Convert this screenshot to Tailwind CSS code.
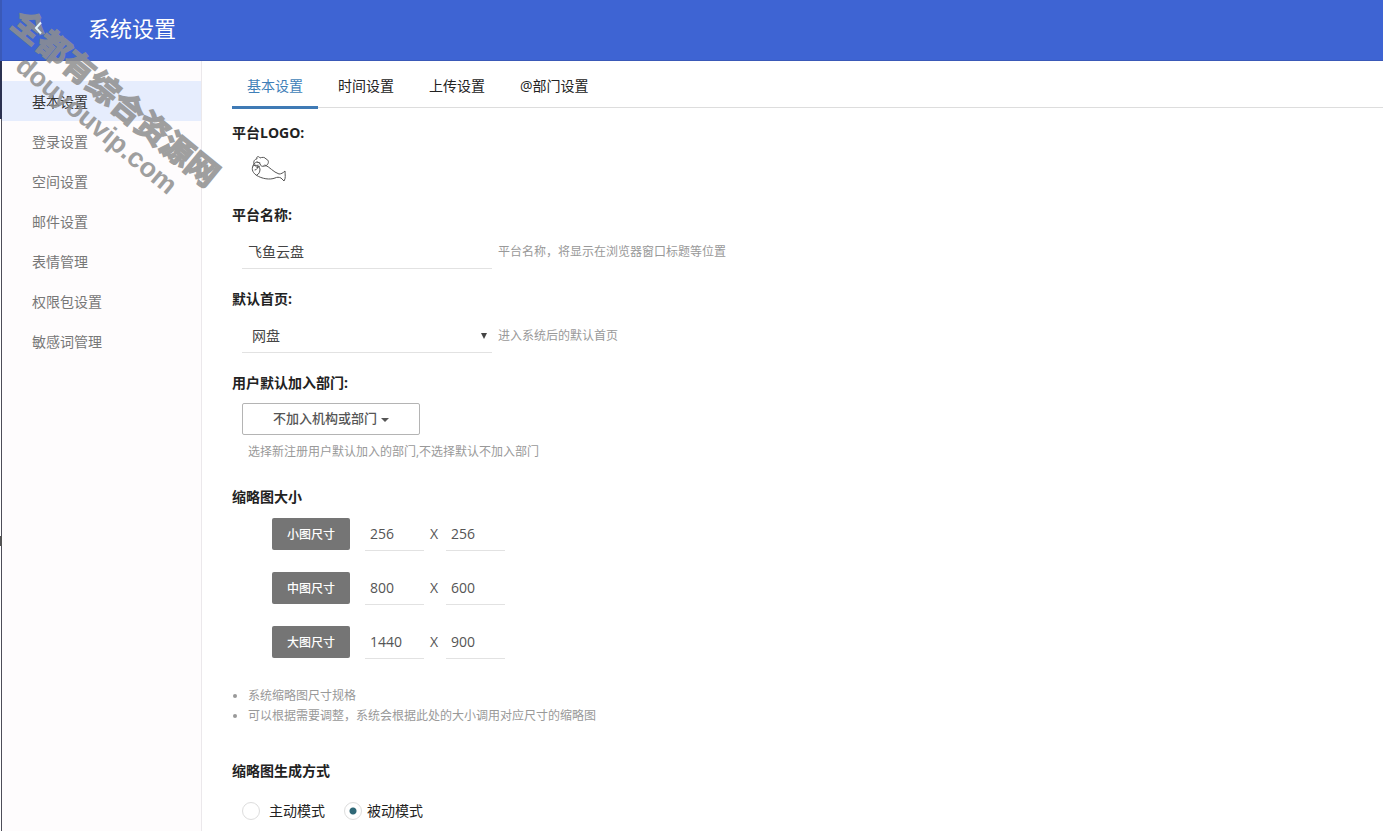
<!DOCTYPE html>
<html lang="zh-CN">
<head>
<meta charset="utf-8">
<meta name="viewport" content="width=device-width, initial-scale=1">
<title>系统设置</title>
<script src="https://cdn.jsdelivr.net/npm/@tailwindcss/browser@4"></script>
</head>
<body class="relative flex h-screen flex-col overflow-hidden bg-white font-['Open_Sans','Noto_Sans_CJK_SC',sans-serif] text-sm leading-5 text-[#222]">
  <header class="flex h-[61px] shrink-0 items-center border-b border-l-2 border-[#3a59b8] bg-[#3e64d3] pb-1 text-white">
    <a href="#" aria-label="返回" class="relative z-10 flex w-[72px] justify-center">
      <svg class="size-4" viewBox="0 0 16 16" fill="none" stroke="#e4f6ff" stroke-width="2"><path d="M11 2.500 6 8l5 5.500"/></svg>
    </a>
    <h1 class="ml-3.5 text-[22px] leading-8">系统设置</h1>
  </header>

  <div class="flex min-h-0 grow">
    <nav class="ml-px w-[201px] shrink-0 border-r border-l border-r-[#ebe8eb] border-l-[#4d4d58] bg-[#fefcfd] pt-5 leading-[38px] text-[#777]" aria-label="设置分类">
      <a href="#" aria-current="page" class="block bg-[#e6edfd] pt-0.5 pl-[30px] text-[#333]">基本设置</a>
      <a href="#" class="block pt-0.5 pl-[30px]">登录设置</a>
      <a href="#" class="block pt-0.5 pl-[30px]">空间设置</a>
      <a href="#" class="block pt-0.5 pl-[30px]">邮件设置</a>
      <a href="#" class="block pt-0.5 pl-[30px]">表情管理</a>
      <a href="#" class="block pt-0.5 pl-[30px]">权限包设置</a>
      <a href="#" class="block pt-0.5 pl-[30px]">敏感词管理</a>
    </nav>

    <main class="grow overflow-hidden pl-[30px]">
      <div class="flex h-[47px] gap-[5px] border-b border-[#ddd] leading-[50px]">
        <a href="#" class="h-12 border-b-3 border-[#3f7ab5] px-[15px] text-[#3f7fb8]">基本设置</a>
        <a href="#" class="px-[15px]">时间设置</a>
        <a href="#" class="px-[15px]">上传设置</a>
        <a href="#" class="px-[15px]">@部门设置</a>
      </div>

      <form class="pt-[15px]">
        <section class="h-[82px]">
          <h2 class="font-bold">平台LOGO:</h2>
          <svg class="mt-3 ml-[18px] h-[30px] w-[38px]" viewBox="0 0 38 30" fill="none" stroke="#555" stroke-width="1" stroke-linecap="round" stroke-linejoin="round" role="img" aria-label="飞鱼">
            <path d="M4 9C3 6 5 4 7 4c-1-3 2-3 3-1 2-1 5-1 6 1 3 1 3 4 1 6-1 1-2 1-3 1"/>
            <path d="M4 9c2-3 5-2 6 0 1 2 2 3 4 2M3 11c3-2 6 0 7 3 0 3-1 5-3 6M5 10c1 3 3 3 5 1M7 7l3 1M8 10c0 3-1 5-3 5"/>
            <path d="M4 9c-3 4-2 8 2 11 6 4 14 5 19 3 2-1 4-1 6 0l3 3c2-3 1-6 1-10-2 2-4 3-6 3-6-2-9-7-14-9"/>
          </svg>
        </section>

        <section class="h-[84px]">
          <h2 class="font-bold"><label for="name">平台名称:</label></h2>
          <div class="mt-2.5 ml-2.5 flex items-center gap-1.5">
            <input id="name" value="飞鱼云盘" class="h-[34px] w-[250px] border-b border-[#e2e2e2] px-1.5 pb-0.5 text-[#444] outline-none">
            <span class="text-xs text-[#999]">平台名称，将显示在浏览器窗口标题等位置</span>
          </div>
        </section>

        <section class="h-[84px]">
          <h2 class="font-bold"><label for="home">默认首页:</label></h2>
          <div class="mt-2.5 ml-2.5 flex items-center gap-1.5">
            <div class="relative w-[250px]">
              <select id="home" class="block h-[34px] w-full appearance-none border-b border-[#e2e2e2] px-2.5 text-[#444] outline-none"><option>网盘</option></select>
              <svg class="pointer-events-none absolute top-3.5 right-[5px] size-1.5" viewBox="0 0 6 6" fill="#444"><path d="M0 0h6L3 6z"/></svg>
            </div>
            <span class="text-xs text-[#999]">进入系统后的默认首页</span>
          </div>
        </section>

        <section class="h-[114px]">
          <h2 class="font-bold">用户默认加入部门:</h2>
          <button type="button" class="mt-2.5 ml-2.5 flex h-8 w-[178px] items-center justify-center gap-1 rounded-xs border border-[#b4b4b4] pb-0.5 text-[13px] font-medium text-[#555]">不加入机构或部门
            <svg class="mt-1 h-1 w-2" viewBox="0 0 8 4" fill="#555"><path d="M0 0h8L4 4z"/></svg>
          </button>
          <p class="mt-[7px] ml-4 text-xs leading-5 text-[#999]">选择新注册用户默认加入的部门,不选择默认不加入部门</p>
        </section>

        <section class="h-[274px]">
          <h2 class="font-bold">缩略图大小</h2>
          <div class="mt-2.5 ml-10 flex flex-col gap-5">
            <div class="flex h-[34px] items-center">
              <span class="flex h-8 w-[78px] items-center justify-center rounded-xs bg-[#757575] pt-0.5 text-xs font-medium text-white">小图尺寸</span>
              <input aria-label="小图宽度" value="256" class="ml-[15px] h-[34px] w-[59px] border-b border-[#e2e2e2] pl-[5px] text-[#555] outline-none">
              <span class="w-5 text-center text-[#555]">X</span>
              <input aria-label="小图高度" value="256" class="ml-0.5 h-[34px] w-[59px] border-b border-[#e2e2e2] pl-[5px] text-[#555] outline-none">
            </div>
            <div class="flex h-[34px] items-center">
              <span class="flex h-8 w-[78px] items-center justify-center rounded-xs bg-[#757575] pt-0.5 text-xs font-medium text-white">中图尺寸</span>
              <input aria-label="中图宽度" value="800" class="ml-[15px] h-[34px] w-[59px] border-b border-[#e2e2e2] pl-[5px] text-[#555] outline-none">
              <span class="w-5 text-center text-[#555]">X</span>
              <input aria-label="中图高度" value="600" class="ml-0.5 h-[34px] w-[59px] border-b border-[#e2e2e2] pl-[5px] text-[#555] outline-none">
            </div>
            <div class="flex h-[34px] items-center">
              <span class="flex h-8 w-[78px] items-center justify-center rounded-xs bg-[#757575] pt-0.5 text-xs font-medium text-white">大图尺寸</span>
              <input aria-label="大图宽度" value="1440" class="ml-[15px] h-[34px] w-[59px] border-b border-[#e2e2e2] pl-[5px] text-[#555] outline-none">
              <span class="w-5 text-center text-[#555]">X</span>
              <input aria-label="大图高度" value="900" class="ml-0.5 h-[34px] w-[59px] border-b border-[#e2e2e2] pl-[5px] text-[#555] outline-none">
            </div>
          </div>
          <ul class="mt-[27px] text-xs leading-5 text-[#999]">
            <li class="flex items-center gap-[11px]"><span class="ml-px size-1 rounded-full bg-[#999]"></span>系统缩略图尺寸规格</li>
            <li class="flex items-center gap-[11px]"><span class="ml-px size-1 rounded-full bg-[#999]"></span>可以根据需要调整，系统会根据此处的大小调用对应尺寸的缩略图</li>
          </ul>
        </section>

        <fieldset>
          <legend class="font-bold">缩略图生成方式</legend>
          <div class="mt-5 ml-2.5 flex gap-[19px]">
            <label class="flex items-center gap-[9px]"><input type="radio" name="mode" class="size-[18px] appearance-none rounded-full border border-[#ddd] bg-white checked:bg-[radial-gradient(circle,#2f6877_3px,#fff_4px)]">主动模式</label>
            <label class="flex items-center gap-[5px]"><input type="radio" name="mode" checked class="size-[18px] appearance-none rounded-full border border-[#ddd] bg-white checked:bg-[radial-gradient(circle,#2f6877_3px,#fff_4px)]">被动模式</label>
          </div>
        </fieldset>
      </form>
    </main>
  </div>

  <!-- Diagonal site watermark -->
  <svg class="pointer-events-none absolute top-0 left-0 h-[210px] w-60 font-['Liberation_Sans','Noto_Sans_CJK_SC',sans-serif] font-bold" viewBox="0 0 240 210" fill="#8f8f8f" stroke="#8f8f8f" opacity="0.85" text-anchor="middle">
    <text font-size="32" stroke-width="1.500" transform="translate(116 98) rotate(39.500)" y="12">全都有综合资源网</text>
    <text font-size="27" stroke-width="0" transform="translate(96 126) rotate(39.500)" y="8">douyouvip.com</text>
  </svg>

  <!-- Window edge marks -->
  <div class="absolute top-[61px] left-0 h-[58px] w-0.5 bg-[#2b3150]"></div>
  <div class="absolute top-[536px] left-0 h-2.5 w-0.5 bg-[#555]"></div>
</body>
</html>
